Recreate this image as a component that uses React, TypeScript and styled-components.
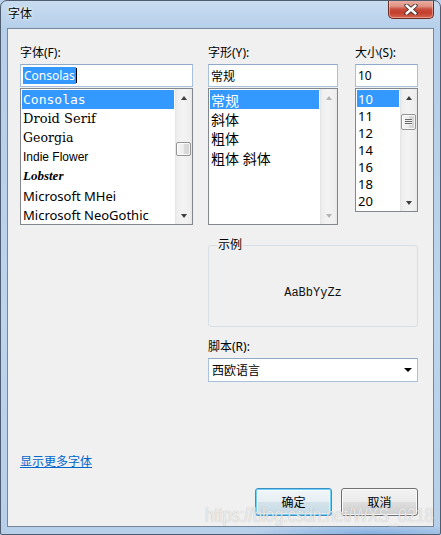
import React from "react";
import styled, { createGlobalStyle } from "styled-components";

const Global = createGlobalStyle`
  html, body { margin: 0; padding: 0; width: 441px; height: 535px; overflow: hidden; background: #b9d1ea; }
  body { font-family: "Noto Sans", "Noto Sans CJK SC", sans-serif; font-size: 12px; color: #000; }
  * { box-sizing: border-box; }
`;

const UI = '"Noto Sans", "Noto Sans CJK SC", sans-serif';

const Window = styled.div`
  position: relative;
  width: 441px;
  height: 535px;
  display: flex;
  flex-direction: column;
  padding: 0 6px 7px 6px;
  border: 1px solid #4f5d70;
  border-radius: 7px 7px 2px 2px;
  overflow: hidden;
  background:
    radial-gradient(ellipse 120px 10px at 370px 100%, rgba(90, 150, 220, 0.55), transparent),
    linear-gradient(180deg, #c9dcf0 0px, #bed5ed 14px, #b6cfea 28px, #bcd4ec 60%, #b7cfe9 100%);
`;

const TitleBar = styled.div`
  height: 27px;
  flex: none;
  display: flex;
  align-items: flex-start;
  justify-content: space-between;
`;

const Title = styled.div`
  padding: 5px 0 0 1px;
  line-height: 16px;
  font-size: 12px;
  font-family: ${UI};
  color: #000;
  text-shadow: 0 0 5px rgba(255, 255, 255, 0.95), 0 0 2px rgba(255, 255, 255, 0.9);
`;

const CloseButton = styled.div`
  margin-top: -1px;
  width: 46px;
  height: 19px;
  display: flex;
  align-items: center;
  justify-content: center;
  border: 1px solid #6b2a22;
  border-top: none;
  border-radius: 0 0 5px 5px;
  background: linear-gradient(180deg, #ecb2a7 0%, #e09283 35%, #c8503f 50%, #c33e2c 70%, #d7654f 100%);
  box-shadow: inset 0 0 0 1px rgba(255, 220, 210, 0.45);
`;

const Client = styled.div`
  flex: 1;
  display: flex;
  flex-direction: column;
  background: #f0f0f0;
  border: 1px solid #77879b;
  padding: 16px 15px 10px 12px;
`;

const TopGrid = styled.div`
  display: grid;
  grid-template-columns: 173px 15px 130px 17px 63px;
  align-items: start;
`;

const Column = styled.div<{ $col: string }>`
  grid-column: ${(p) => p.$col};
  grid-row: 1;
  display: flex;
  flex-direction: column;
`;

const Label = styled.div`
  height: 16px;
  line-height: 16px;
  font-size: 12px;
  font-family: ${UI};
  margin-bottom: 3px;
  white-space: nowrap;
`;

const TextBox = styled.div`
  height: 23px;
  margin-bottom: 1px;
  display: flex;
  align-items: center;
  padding-left: 2px;
  background: #fff;
  border: 1px solid #a9c0da;
  border-top-color: #8fa9c8;
  font-size: 12px;
  font-family: ${UI};
  white-space: nowrap;
`;

const Selected = styled.span`
  background: #3399ff;
  color: #fff;
  line-height: 17px;
  padding: 0 1px;
`;

const Caret = styled.span`
  display: inline-block;
  width: 1px;
  height: 15px;
  background: #000;
`;

const ListBox = styled.div<{ $h: number }>`
  height: ${(p) => p.$h}px;
  display: flex;
  background: #fff;
  border: 1px solid #828790;
  overflow: hidden;
`;

const Items = styled.div`
  flex: 1;
  min-width: 0;
  padding: 1px;
  display: flex;
  flex-direction: column;
`;

const Item = styled.div<{ $sel?: boolean; $h: number; $family?: string; $size?: number; $weight?: number; $italic?: boolean }>`
  height: ${(p) => p.$h}px;
  flex: none;
  display: flex;
  align-items: center;
  padding-left: 1px;
  white-space: nowrap;
  overflow: hidden;
  background: ${(p) => (p.$sel ? "#3399ff" : "transparent")};
  color: ${(p) => (p.$sel ? "#fff" : "#000")};
  font-family: ${(p) => p.$family || UI};
  font-size: ${(p) => p.$size || 14}px;
  font-weight: ${(p) => p.$weight || 400};
  font-style: ${(p) => (p.$italic ? "italic" : "normal")};
`;

const ScrollBar = styled.div`
  width: 17px;
  flex: none;
  display: flex;
  flex-direction: column;
  background: linear-gradient(90deg, #e3e3e3 0px, #eeeeee 2px, #f3f3f3 8px, #eeeeee 15px, #e6e6e6 17px);
`;

const Arrow = styled.div<{ $dir: "up" | "down"; $off?: boolean }>`
  height: 17px;
  flex: none;
  display: flex;
  align-items: center;
  justify-content: center;
  margin-top: ${(p) => (p.$dir === "down" ? "auto" : "0")};
  &::after {
    content: "";
    width: 0;
    height: 0;
    border-left: 3.5px solid transparent;
    border-right: 3.5px solid transparent;
    ${(p) =>
      p.$dir === "up"
        ? `border-bottom: 4px solid ${p.$off ? "#b4b4b4" : "#3d3d3d"};`
        : `border-top: 4px solid ${p.$off ? "#b4b4b4" : "#3d3d3d"};`}
  }
`;

const Thumb = styled.div<{ $top: number; $h: number; $grip?: boolean }>`
  position: relative;
  margin: ${(p) => p.$top}px 1px 0 1px;
  height: ${(p) => p.$h}px;
  flex: none;
  border: 1px solid #959595;
  border-radius: 2px;
  background: linear-gradient(90deg, #f6f6f6 0%, #ececec 50%, #dcdcdc 51%, #d3d3d3 100%);
  box-shadow: inset 0 0 0 1px rgba(255, 255, 255, 0.75);
  &::after {
    content: "";
    display: ${(p) => (p.$grip ? "block" : "none")};
    position: absolute;
    left: 3px;
    right: 3px;
    top: 4px;
    height: 6px;
    background: repeating-linear-gradient(180deg, #6b6b6b 0px, #6b6b6b 1px, #f2f2f2 1px, #f2f2f2 2px);
  }
`;

const Lower = styled.div`
  grid-column: 3 / 6;
  grid-row: 2;
  display: flex;
  flex-direction: column;
  margin-top: 20px;
`;

const GroupBox = styled.div`
  position: relative;
  height: 82px;
  border: 1px solid #d5dfe5;
  border-radius: 3px;
  display: flex;
  align-items: center;
  justify-content: center;
  padding-top: 13px;
  margin-bottom: 12px;
`;

const Legend = styled.span`
  position: absolute;
  top: -9px;
  left: 8px;
  padding: 0 1px;
  background: #f0f0f0;
  line-height: 16px;
  font-size: 12px;
  font-family: ${UI};
`;

const Sample = styled.div`
  font-family: "Liberation Mono", "DejaVu Sans Mono", monospace;
  font-size: 12px;
  color: #111;
`;

const Combo = styled.div`
  height: 24px;
  display: flex;
  align-items: center;
  justify-content: space-between;
  padding: 0 5px 0 3px;
  background: #fff;
  border: 1px solid #a9c0da;
  border-top-color: #8fa9c8;
  font-size: 12px;
  font-family: ${UI};
  &::after {
    content: "";
    border-left: 4px solid transparent;
    border-right: 4px solid transparent;
    border-top: 4px solid #000;
  }
`;

const Spacer = styled.div`
  flex: 1;
`;

const Link = styled.a`
  align-self: flex-start;
  line-height: 16px;
  font-size: 12px;
  font-family: ${UI};
  color: #0066cc;
  text-decoration: underline;
`;

const ButtonRow = styled.div`
  display: flex;
  justify-content: flex-end;
  gap: 9px;
  margin-top: 18px;
`;

const Button = styled.div<{ $default?: boolean }>`
  width: 77px;
  height: 28px;
  display: flex;
  align-items: center;
  justify-content: center;
  border-radius: 3px;
  font-size: 12px;
  font-family: ${UI};
  border: 1px solid ${(p) => (p.$default ? "#3c8ec6" : "#707070")};
  background: ${(p) =>
    p.$default
      ? "linear-gradient(180deg, #f1f6f9 0%, #e5eef3 50%, #d4e3eb 51%, #c5d9e4 100%)"
      : "linear-gradient(180deg, #f2f2f2 0%, #ebebeb 50%, #dddddd 51%, #cfcfcf 100%)"};
  box-shadow: ${(p) =>
    p.$default ? "inset 0 0 0 1px #6fd0f3, inset 0 0 0 2px rgba(255,255,255,0.5)" : "inset 0 0 0 1px #fbfbfb"};
`;

const Watermark = styled.div`
  position: absolute;
  left: 204px;
  top: 504px;
  line-height: 20px;
  font-size: 20px;
  font-family: "Liberation Sans", sans-serif;
  color: rgba(255, 255, 255, 0.72);
  text-shadow: 0 0 1px rgba(120, 120, 120, 0.55);
  white-space: nowrap;
  transform: scaleX(0.8);
  transform-origin: 0 0;
  pointer-events: none;
`;

const fonts = [
  { name: "Consolas", family: '"DejaVu Sans Mono", monospace', size: 13 },
  { name: "Droid Serif", family: '"DejaVu Serif", serif', size: 13 },
  { name: "Georgia", family: '"DejaVu Serif", serif', size: 12.5 },
  { name: "Indie Flower", family: '"Liberation Sans", sans-serif', size: 12 },
  { name: "Lobster", family: '"Liberation Serif", serif', size: 13, weight: 700, italic: true },
  { name: "Microsoft MHei", family: '"Noto Sans", sans-serif', size: 13 },
  { name: "Microsoft NeoGothic", family: '"Noto Sans", sans-serif', size: 13 },
];

const styles = ["常规", "斜体", "粗体", "粗体 斜体"];
const sizes = ["10", "11", "12", "14", "16", "18", "20"];

export default function App() {
  return (
    <>
      <Global />
      <Window>
        <TitleBar>
          <Title>字体</Title>
          <CloseButton>
            <svg width="14" height="11" viewBox="0 0 14 11">
              <path d="M2.5 1.5 L11.5 9.5 M11.5 1.5 L2.5 9.5" stroke="#3a2a2a" strokeWidth="4.2" strokeLinecap="round" />
              <path d="M2.5 1.5 L11.5 9.5 M11.5 1.5 L2.5 9.5" stroke="#ffffff" strokeWidth="2.4" strokeLinecap="round" />
            </svg>
          </CloseButton>
        </TitleBar>
        <Client>
          <TopGrid>
            <Column $col="1">
              <Label>字体(F):</Label>
              <TextBox>
                <Selected>Consolas</Selected>
                <Caret />
              </TextBox>
              <ListBox $h={137}>
                <Items>
                  {fonts.map((f, i) => (
                    <Item
                      key={f.name}
                      $h={19.2}
                      $sel={i === 0}
                      $family={f.family}
                      $size={f.size}
                      $weight={f.weight}
                      $italic={f.italic}
                    >
                      {f.name}
                    </Item>
                  ))}
                </Items>
                <ScrollBar>
                  <Arrow $dir="up" />
                  <Thumb $top={36} $h={14} />
                  <Arrow $dir="down" />
                </ScrollBar>
              </ListBox>
            </Column>
            <Column $col="3">
              <Label>字形(Y):</Label>
              <TextBox>常规</TextBox>
              <ListBox $h={137}>
                <Items>
                  {styles.map((s, i) => (
                    <Item key={s} $h={19.3} $sel={i === 0} $size={14}>
                      {s}
                    </Item>
                  ))}
                </Items>
                <ScrollBar>
                  <Arrow $dir="up" $off />
                  <Arrow $dir="down" $off />
                </ScrollBar>
              </ListBox>
            </Column>
            <Column $col="5">
              <Label>大小(S):</Label>
              <TextBox>10</TextBox>
              <ListBox $h={124}>
                <Items>
                  {sizes.map((s, i) => (
                    <Item key={s} $h={17} $sel={i === 0} $size={13}>
                      {s}
                    </Item>
                  ))}
                </Items>
                <ScrollBar>
                  <Arrow $dir="up" />
                  <Thumb $top={8} $h={16} $grip />
                  <Arrow $dir="down" />
                </ScrollBar>
              </ListBox>
            </Column>
            <Lower>
              <GroupBox>
                <Legend>示例</Legend>
                <Sample>AaBbYyZz</Sample>
              </GroupBox>
              <Label>脚本(R):</Label>
              <Combo>西欧语言</Combo>
            </Lower>
          </TopGrid>
          <Spacer />
          <Link>显示更多字体</Link>
          <ButtonRow>
            <Button $default>确定</Button>
            <Button>取消</Button>
          </ButtonRow>
        </Client>
        <Watermark>https://blog.csdn.net/WXS_0218</Watermark>
      </Window>
    </>
  );
}
